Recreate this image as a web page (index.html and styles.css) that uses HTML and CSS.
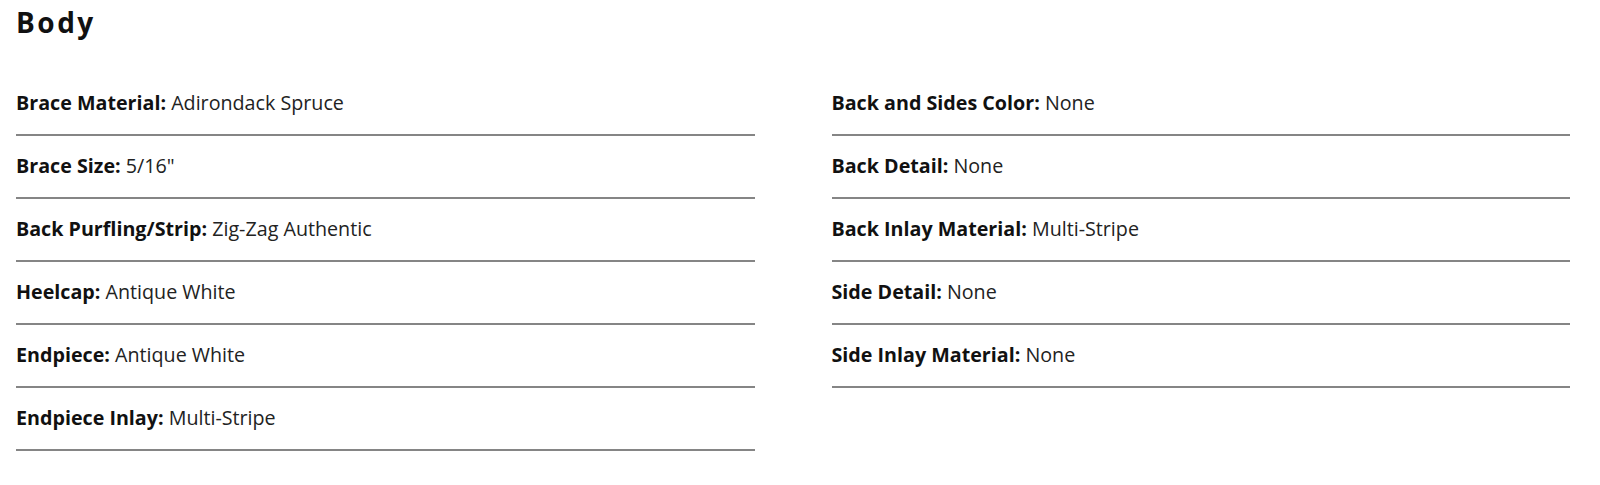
FILE: index.html
```html
<!DOCTYPE html>
<html lang="en">
<head>
    <meta charset="UTF-8">
    <meta name="viewport" content="width=device-width, initial-scale=1.0">
    <title>Body Specs</title>
    <link rel="stylesheet" href="styles.css">
</head>
<body>
    <div class="spec-section">
        <h2 class="spec-title">Body</h2>

        <div class="spec-columns">
            <ul class="spec-list">
                <li class="spec-row"><span class="spec-label">Brace Material:</span> Adirondack Spruce</li>
                <li class="spec-row"><span class="spec-label">Brace Size:</span> 5/16"</li>
                <li class="spec-row"><span class="spec-label">Back Purfling/Strip:</span> Zig-Zag Authentic</li>
                <li class="spec-row"><span class="spec-label">Heelcap:</span> Antique White</li>
                <li class="spec-row"><span class="spec-label">Endpiece:</span> Antique White</li>
                <li class="spec-row"><span class="spec-label">Endpiece Inlay:</span> Multi-Stripe</li>
            </ul>

            <ul class="spec-list">
                <li class="spec-row"><span class="spec-label">Back and Sides Color:</span> None</li>
                <li class="spec-row"><span class="spec-label">Back Detail:</span> None</li>
                <li class="spec-row"><span class="spec-label">Back Inlay Material:</span> Multi-Stripe</li>
                <li class="spec-row"><span class="spec-label">Side Detail:</span> None</li>
                <li class="spec-row"><span class="spec-label">Side Inlay Material:</span> None</li>
            </ul>
        </div>
    </div>
</body>
</html>
```

FILE: styles.css
```css
body {
    font-family: "Open Sans", Arial, sans-serif;
    color: #222;
    background-color: #fff;
    margin: 0;
    padding: 0;
}
.spec-section {
    padding: 0 30px 0 16px;
}
.spec-title {
    font-size: 28px;
    font-weight: 700;
    letter-spacing: 2.5px;
    line-height: normal;
    color: #111;
    margin: 3px 0 0 0;
}
.spec-columns {
    display: grid;
    grid-template-columns: 1fr 1fr;
    column-gap: 77px;
    margin-top: 32px;
}
.spec-list {
    list-style: none;
    margin: 0;
    padding: 0;
}
.spec-row {
    font-size: 19.7px;
    line-height: 27px;
    padding: 16px 0 18px 0;
    border-bottom: 2px solid #858585;
}
.spec-label {
    font-weight: 700;
    color: #111;
}
```
